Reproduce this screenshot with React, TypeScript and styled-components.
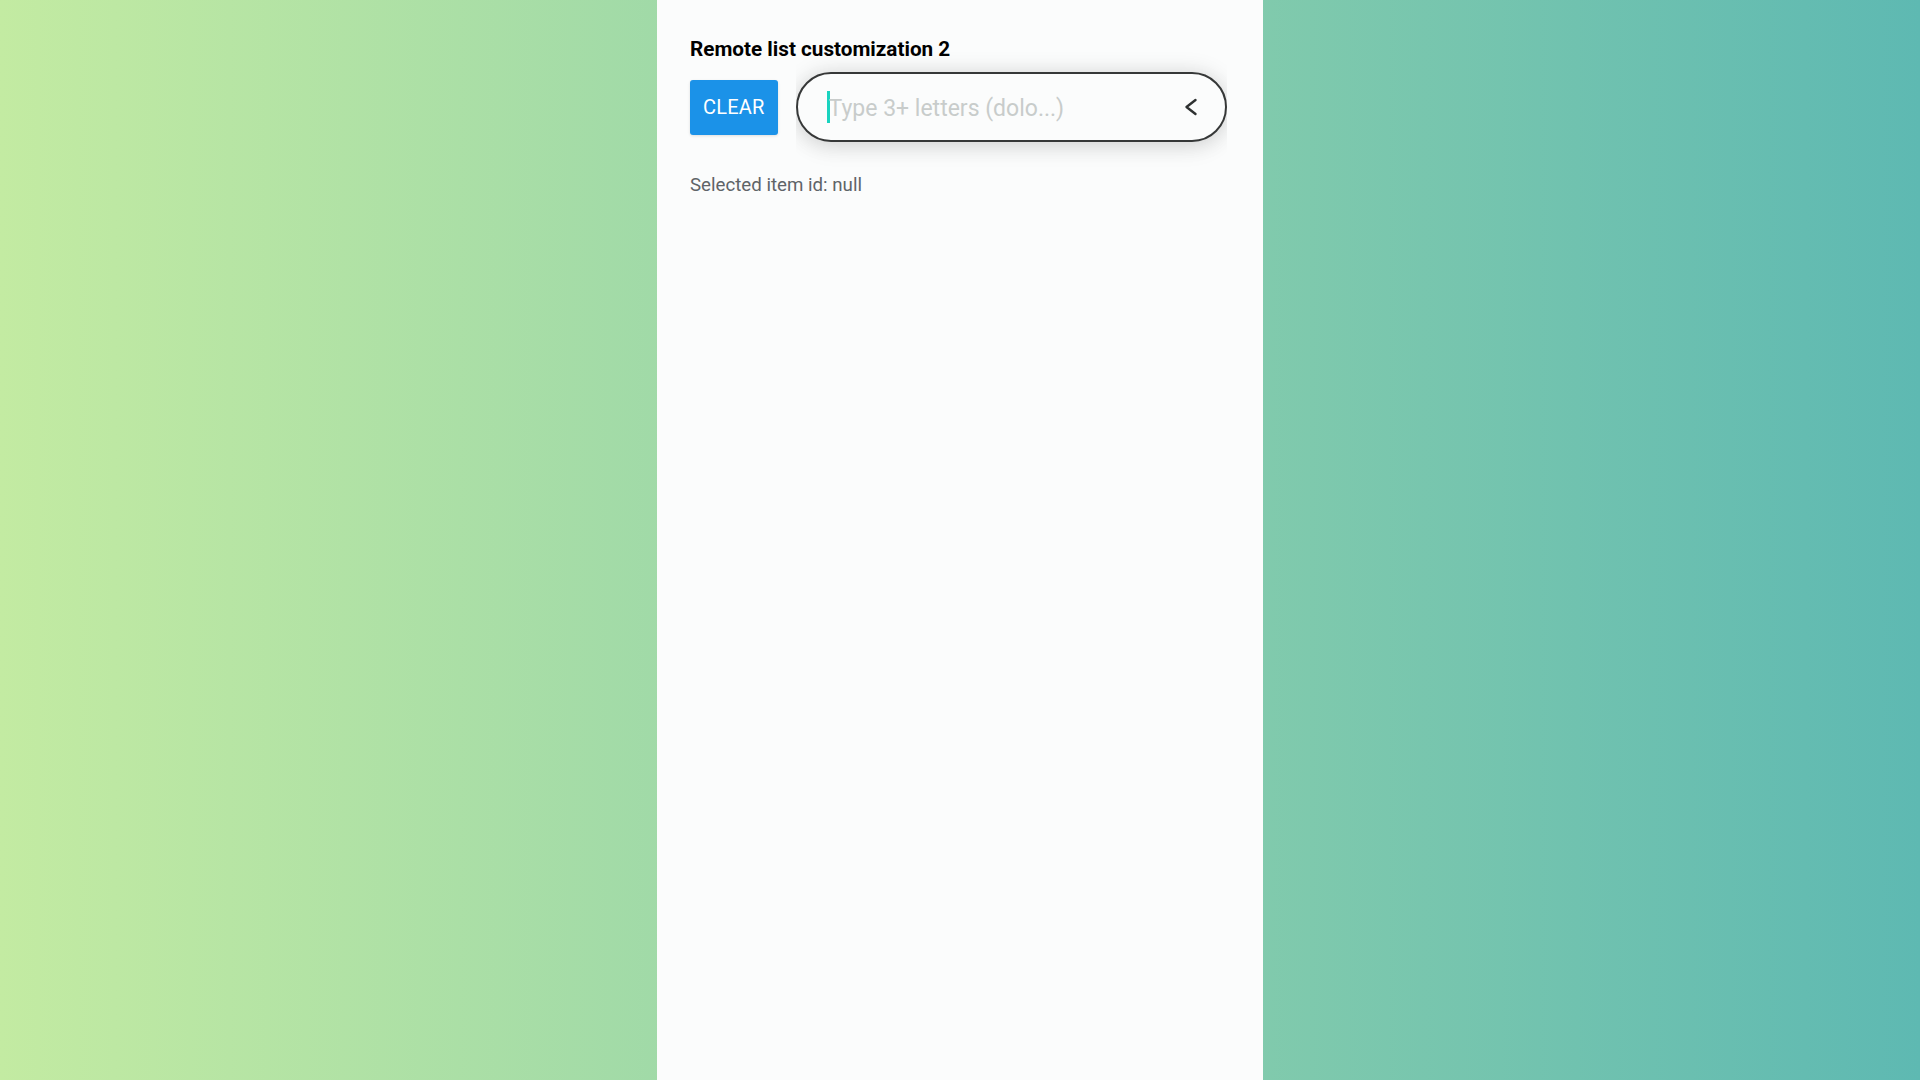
import React from 'react'
import styled, { createGlobalStyle } from 'styled-components'

const GlobalStyle = createGlobalStyle`
  html, body, #root {
    margin: 0;
    padding: 0;
    height: 100%;
  }
  body {
    font-family: Roboto, "Liberation Sans", sans-serif;
    background: linear-gradient(90deg, #c3eba2 0%, #5eb9b2 100%);
  }
`

const Page = styled.div`
  display: flex;
  justify-content: center;
  height: 100vh;
`

const Panel = styled.main`
  width: 606px;
  height: 100%;
  box-sizing: border-box;
  padding: 38px 33px 0;
  background: #fbfcfc;
`

const Title = styled.h2`
  margin: 0 0 12px;
  font-size: 20.7px;
  line-height: 22px;
  font-weight: 700;
  color: #000;
`

const Row = styled.div`
  display: flex;
  align-items: center;
  gap: 18px;
`

const ClearButton = styled.button`
  height: 55px;
  padding: 0 13px;
  border: none;
  border-radius: 3px;
  background: #1b92e8;
  color: #fff;
  font-family: Roboto, "Liberation Sans", sans-serif;
  font-size: 20px;
  letter-spacing: 0.2px;
  cursor: pointer;
  box-shadow: 0 1px 3px rgba(0, 0, 0, 0.12);
`

const ShadowClip = styled.div`
  overflow: hidden;
  padding: 22px 0 32px;
  margin: -22px 0 -32px;
`

const Field = styled.div`
  display: flex;
  align-items: center;
  width: 431px;
  height: 70px;
  box-sizing: border-box;
  padding: 0 26px 0 29px;
  border: 2px solid #363838;
  border-radius: 35px;
  background: #fbfcfc;
  box-shadow: 0 0 22px rgba(0, 0, 0, 0.13), 0 8px 22px rgba(0, 0, 0, 0.07);
`

const Caret = styled.span`
  width: 3px;
  height: 32px;
  background: #19d3bf;
  flex: none;
`

const Placeholder = styled.span`
  flex: 1;
  padding-top: 3px;
  font-size: 23px;
  color: #c8cccb;
  margin-left: -1px;
  white-space: nowrap;
`

const Toggle = styled.span`
  display: flex;
  align-items: center;
  justify-content: center;
  width: 16px;
  height: 20px;
  color: #2e3131;
`

const Status = styled.p`
  margin: 31px 0 0;
  font-size: 18.7px;
  line-height: 24px;
  color: #5f6468;
`

const ChevronLeft = () => (
  <svg width="16" height="20" viewBox="0 0 16 20" fill="none">
    <polyline points="12.5,3 3.5,10 12.5,17" stroke="currentColor" strokeWidth="2.4" strokeLinecap="round" strokeLinejoin="round" />
  </svg>
)

export default function App() {
  return (
    <>
      <GlobalStyle />
      <Page>
        <Panel>
          <Title>Remote list customization 2</Title>
          <Row>
            <ClearButton>CLEAR</ClearButton>
            <ShadowClip>
              <Field>
                <Caret />
                <Placeholder>Type 3+ letters (dolo...)</Placeholder>
                <Toggle>
                  <ChevronLeft />
                </Toggle>
              </Field>
            </ShadowClip>
          </Row>
          <Status>Selected item id: null</Status>
        </Panel>
      </Page>
    </>
  )
}
